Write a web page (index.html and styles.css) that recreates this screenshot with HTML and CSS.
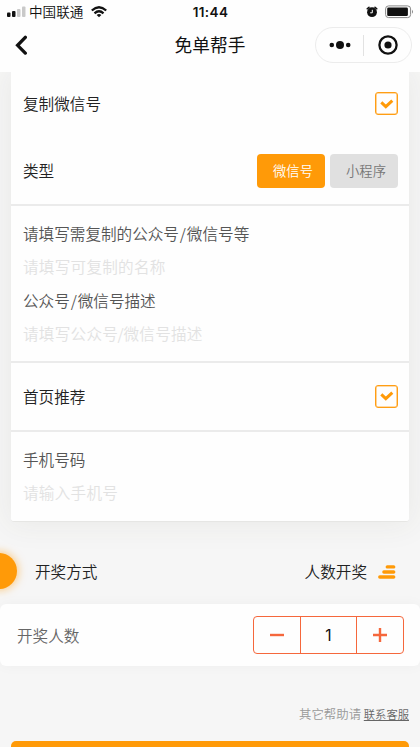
FILE: index.html
```html
<!DOCTYPE html>
<html lang="zh-CN">
<head>
<meta charset="utf-8">
<title>免单帮手</title>
<link rel="stylesheet" href="styles.css">
</head>
<body>
<div class="screen">
  <header class="top">
    <div class="status">
      <div class="carrier">
        <svg class="signal" width="19" height="12" viewBox="0 0 19 12"><rect x="0" y="6.5" width="3.5" height="4.5" rx="1" fill="#111"/><rect x="5" y="5" width="3.5" height="6" rx="1" fill="#111"/><rect x="10" y="3" width="3.5" height="8" rx="1" fill="#c9c9c9"/><rect x="15" y=".5" width="3.5" height="10.5" rx="1" fill="#c9c9c9"/></svg>
        <span>中国联通</span>
        <svg class="wifi" width="16" height="12" viewBox="0 0 16 12"><g fill="none" stroke="#111" stroke-width="2.3"><path d="M.8 4.5Q8-2 15.2 4.5"/><path d="M3.5 7.3Q8 3.3 12.5 7.3"/></g><path d="M5.6 9Q8 7 10.4 9L8 11.3z" fill="#111"/></svg>
      </div>
      <span class="clock">11:44</span>
      <div class="power">
        <svg width="12" height="12" viewBox="0 0 12 12"><circle cx="6" cy="6.2" r="4.9" fill="#111"/><path d="M1.2 2.8 3 1.3M10.8 2.8 9 1.3" stroke="#111" stroke-width="1.5" stroke-linecap="round"/><path d="M6.3 3.8v3H4.2" fill="none" stroke="#fff"/></svg>
        <svg width="29" height="14" viewBox="0 0 29 14"><rect x=".6" y=".9" width="25" height="11.7" rx="3" fill="none" stroke="#888"/><rect x="2.2" y="2.5" width="20.7" height="8.5" rx="1.3" fill="#111"/><path d="M27 4.8q2 2 0 4z" fill="#888"/></svg>
      </div>
    </div>
    <div class="nav">
      <svg class="back" width="14" height="22" viewBox="0 0 14 22"><path d="M12.3 3.3 4.6 11.3l7.7 7.8" fill="none" stroke="#111" stroke-width="3.3" stroke-linecap="round" stroke-linejoin="miter"/></svg>
      <h1>免单帮手</h1>
      <div class="capsule">
        <svg width="22" height="10" viewBox="0 0 22 10"><circle cx="2.8" cy="5" r="2.3"/><circle cx="11" cy="5" r="4"/><circle cx="19.2" cy="5" r="2.3"/></svg>
        <i></i>
        <svg width="20" height="20" viewBox="0 0 20 20"><circle cx="10" cy="10" r="8.6" fill="none" stroke="#111" stroke-width="2.3"/><circle cx="10" cy="10" r="3.6"/></svg>
      </div>
    </div>
  </header>

  <main>
    <section class="card">
      <div class="row copy-row">
        <span>复制微信号</span>
        <span class="check"><svg width="14" height="12" viewBox="0 0 14 12"><path d="M1.3 4.4 5.8 8.6 12.3 2.6" fill="none" stroke="#ff9a08" stroke-width="3"/></svg></span>
      </div>
      <div class="row type">
        <span>类型</span>
        <div class="tabs"><span class="tab active">微信号</span><span class="tab">小程序</span></div>
      </div>
      <div class="fields copy">
        <p>请填写需复制的公众号<b>/</b>微信号等</p>
        <p class="hint">请填写可复制的名称</p>
        <p>公众号<b>/</b>微信号描述</p>
        <p class="hint">请填写公众号<b>/</b>微信号描述</p>
      </div>
      <div class="row recommend">
        <span>首页推荐</span>
        <span class="check"><svg width="14" height="12" viewBox="0 0 14 12"><path d="M1.3 4.4 5.8 8.6 12.3 2.6" fill="none" stroke="#ff9a08" stroke-width="3"/></svg></span>
      </div>
      <div class="fields phone">
        <p>手机号码</p>
        <p class="hint">请输入手机号</p>
      </div>
    </section>

    <section class="draw">
      <span class="dot"></span>
      <span class="draw-label">开奖方式</span>
      <span class="draw-value">人数开奖</span>
      <svg class="bars" width="18" height="14" viewBox="0 0 18 14"><path d="M9.3 1.9h6.4M5.9 7h9.8M1.8 12h13.9" stroke="#ff9a08" stroke-width="3.4" stroke-linecap="round"/></svg>
    </section>

    <section class="count">
      <span>开奖人数</span>
      <div class="stepper">
        <span><svg width="14" height="14" viewBox="0 0 14 14"><path d="M0 7h14" stroke="#f5673c" stroke-width="2.4"/></svg></span>
        <span class="number">1</span>
        <span><svg width="14" height="14" viewBox="0 0 14 14"><path d="M0 7h14M7 0v14" stroke="#f5673c" stroke-width="2.4"/></svg></span>
      </div>
    </section>

    <p class="help">其它帮助请 <a>联系客服</a></p>
    <div class="submit"></div>
  </main>
</div>
</body>
</html>
```
FILE: styles.css
```css
* { box-sizing: border-box; margin: 0; }
body {
  font-family: "Noto Sans CJK SC", sans-serif;
  font-size: 15.6px;
  font-weight: 350;
  color: #222;
  background: #f6f6f6;
}
svg { display: block; flex: none; }
.screen { height: 747px; overflow: hidden; display: flex; flex-direction: column; }

.top { flex: none; height: 72px; background: #fefefe; color: #111; position: relative; z-index: 1; }
.status {
  height: 24px;
  display: grid;
  grid-template-columns: 1fr auto 1fr;
  align-items: center;
  padding: 0 6px 0 7px;
}
.carrier { display: flex; align-items: center; font-size: 13.6px; line-height: 22px; }
.carrier span { margin-top: -2px; }
.signal { margin-right: 3px; }
.wifi { margin: -1px 0 0 8px; }
.clock { font: 600 13.5px/24px Inter, sans-serif; letter-spacing: .4px; }
.power { display: flex; justify-content: flex-end; align-items: center; gap: 7px; margin: -1px 0 0; }
.nav {
  height: 42px;
  display: grid;
  grid-template-columns: 1fr auto 1fr;
  align-items: center;
  padding: 0 8px 0 13px;
}
.nav h1 { font-size: 17.7px; font-weight: 400; line-height: 38px; margin: -2px 5px 0 0; }
.capsule {
  justify-self: end;
  width: 97px;
  height: 36px;
  border: 1px solid #ececec;
  border-radius: 18px;
  display: flex;
  align-items: center;
  padding: 0 13px;
  fill: #111;
}
.capsule i { width: 1px; height: 21px; background: #e2e2e2; margin: 0 14px 0 12px; }

.card {
  margin: 0 11px;
  height: 450px;
  background: #fefefe;
  border-bottom: 1px solid #e6e6e4;
  border-radius: 0 0 3px 3px;
  box-shadow: 0 0 30px 4px rgba(80, 72, 50, .065);
}
.row { height: 63px; padding: 0 11px 0 12px; display: flex; align-items: center; justify-content: space-between; }
.copy-row > span:first-child { margin-top: -2px; }
.type { height: 71px; border-bottom: 2px solid #ebebeb; }
.type > span { padding-top: 1px; }
.check {
  width: 23px;
  height: 23px;
  border: 1px solid #ff9e14;
  border-radius: 3px;
  box-shadow: inset 0 0 0 .6px #ffb650;
  display: flex;
  align-items: center;
  justify-content: center;
}
.tabs { display: flex; gap: 5px; padding-top: 2px; }
.tab {
  width: 68px;
  height: 34px;
  border-radius: 4px;
  background: #e0e0e0;
  color: #777;
  font-size: 13.3px;
  line-height: 33px;
  text-align: center;
  padding-left: 4px;
}
.tab.active { background: #ff9a08; color: #fff; }
.fields { padding: 11px 12px; color: #555; line-height: 33.4px; }
.fields b { font-weight: inherit; margin: 0 .9px; }
.fields .hint { color: #e2e2e2; letter-spacing: .25px; }
.hint b { margin: 0 -.5px; }
.copy { height: 157px; border-bottom: 2px solid #ebebeb; }
.recommend { height: 69px; border-bottom: 2px solid #ebebeb; }
.recommend > span:first-child { margin-top: -1px; }
.recommend .check { margin-top: -1px; }

.draw { position: relative; height: 82px; padding: 16px 24px 0 35px; display: flex; align-items: center; }
.dot {
  position: absolute;
  left: -19px;
  top: 31px;
  width: 36px;
  height: 36px;
  border-radius: 50%;
  background: #ff9a08;
  box-shadow: 0 0 9px 1px rgba(255, 154, 8, .5);
}
.draw-value { margin: 0 11px 0 auto; }
.bars { margin-top: 2px; }
.count {
  height: 62px;
  background: #fefefe;
  border-radius: 6px;
  padding: 0 16px 0 17px;
  display: flex;
  align-items: center;
  justify-content: space-between;
  color: #666;
  box-shadow: 0 0 14px rgba(0, 0, 0, .035);
}
.count > span { margin-top: -1px; }
.stepper {
  width: 151px;
  height: 38px;
  border: 1px solid #f5673c;
  border-radius: 4px;
  display: grid;
  grid-template-columns: 46px 1fr 46px;
}
.stepper span { display: flex; align-items: center; justify-content: center; }
.stepper .number {
  border: solid #f5673c;
  border-width: 0 1px;
  color: #111;
  padding-top: 1px;
  font: 400 15.5px/35px Inter, sans-serif;
}
.help { margin-top: 36px; padding-right: 11px; text-align: right; font-size: 12.4px; line-height: 24px; color: #999; }
.help a { font-size: 11.3px; color: #666; text-decoration: underline; text-underline-offset: 1px; }
.submit { margin: 15px 11px 0; height: 45px; border-radius: 5px; background: #ff9a08; }
```
